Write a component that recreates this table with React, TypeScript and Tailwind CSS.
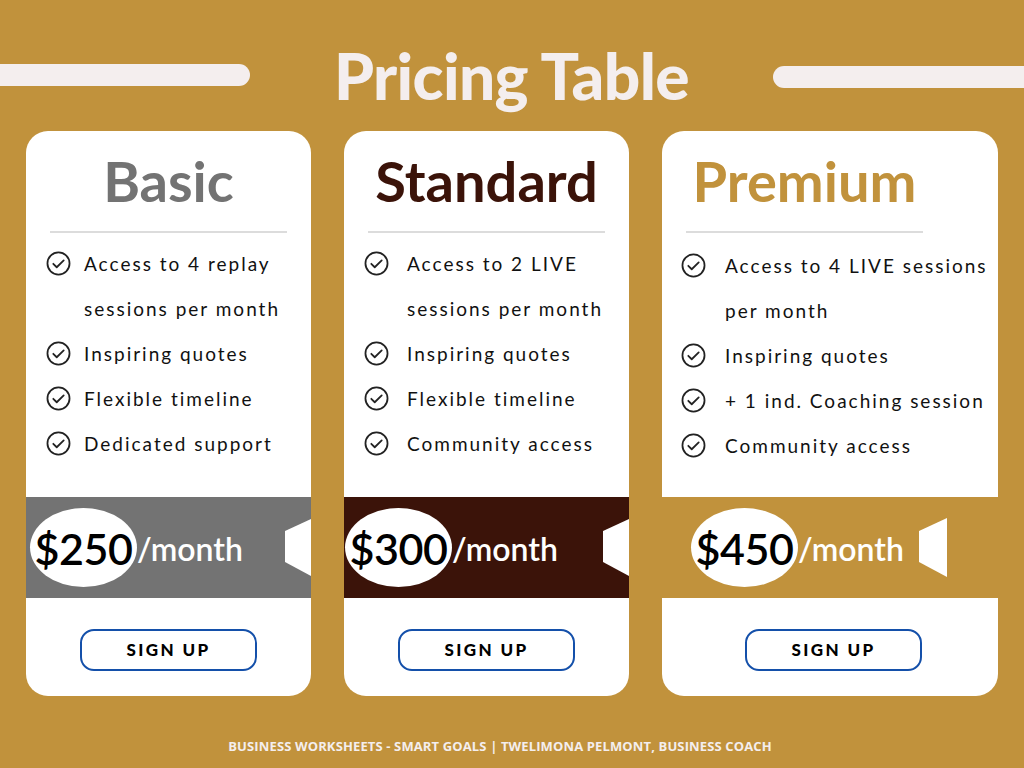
import React from "react";

type Plan = {
  name: string;
  nameColor: string;
  band: string;
  price: string;
  features: string[];
  wide?: boolean;
};

const PLANS: Plan[] = [
  {
    name: "Basic",
    nameColor: "text-[#737373]",
    band: "bg-[#737373]",
    price: "$250",
    features: ["Access to 4 replay sessions per month", "Inspiring quotes", "Flexible timeline", "Dedicated support"],
  },
  {
    name: "Standard",
    nameColor: "text-[#3b1309]",
    band: "bg-[#3b1309]",
    price: "$300",
    features: ["Access to 2 LIVE sessions per month", "Inspiring quotes", "Flexible timeline", "Community access"],
  },
  {
    name: "Premium",
    nameColor: "text-[#c1923c]",
    band: "bg-[#c1923c]",
    price: "$450",
    features: ["Access to 4 LIVE sessions per month", "Inspiring quotes", "+ 1 ind. Coaching session", "Community access"],
    wide: true,
  },
];

function CheckIcon() {
  return (
    <svg width="25" height="25" viewBox="0 0 24 24" fill="none" stroke="#222" strokeWidth="1.7" strokeLinecap="round" strokeLinejoin="round">
      <circle cx="12" cy="12" r="10.6" />
      <path d="M7 12.3l3.3 3.3L17 9" />
    </svg>
  );
}

function Speaker() {
  // white wedge at the right of the price band
  return (
    <svg width="28" height="59" viewBox="0 0 28 59" className="shrink-0">
      <polygon points="0,13 28,0 28,59 0,44" fill="#fff" />
    </svg>
  );
}

function Card({ plan, index }: { plan: Plan; index: number }) {
  const textPad = index === 0 ? "gap-[13px]" : index === 1 ? "gap-[18px]" : "gap-[19px]";
  return (
    <div className={`${plan.wide ? "w-[336px]" : "w-[285px]"} h-[565px] shrink-0 bg-white rounded-[22px] overflow-hidden flex flex-col`}>
      {/* header */}
      <div className="w-[285px] h-[100px] flex items-center justify-center">
        <h2 className={`font-['Lato'] font-bold text-[56px] leading-none ${plan.nameColor}`}>{plan.name}</h2>
      </div>
      <div className="ml-[24px] w-[237px] h-[2px] bg-[#dcdcdc]" />

      {/* features */}
      <ul className={`${index === 2 ? "mt-[10px] h-[254px] pl-[19px] pr-[4px]" : "mt-[8px] h-[256px] pl-[20px] pr-[10px]"}`}>
        {plan.features.map((f) => (
          <li key={f} className={`flex items-start ${textPad}`}>
            <span className="h-[45px] flex items-center shrink-0">
              <CheckIcon />
            </span>
            <span className="font-['Lato'] text-[19px] leading-[45px] tracking-[0.105em] text-[#111]">{f}</span>
          </li>
        ))}
      </ul>

      {/* price band */}
      <div className={`${plan.band} h-[101px] flex items-center ${index === 0 ? "pl-[4px]" : index === 1 ? "pl-[1px]" : "pl-[29px] pr-[51px]"}`}>
        <div className="w-[107px] h-[79px] rounded-[50%] bg-white flex items-center justify-center shrink-0">
          <span className="font-['Lato'] font-semibold text-[43px] leading-none text-black tracking-[-0.01em] pt-[2px]">{plan.price}</span>
        </div>
        <span className="font-['Lato'] font-semibold text-[32px] leading-none text-white mt-[2px]">/month</span>
        <div className={`ml-auto ${index === 2 ? "" : "mr-[-2px]"} flex items-center`}>
          <Speaker />
        </div>
      </div>

      {/* button */}
      <div className={`${plan.wide ? "pl-[83px]" : "justify-center"} flex pt-[31px]`}>
        <button className="w-[177px] h-[42px] rounded-[14px] border-2 border-[#1450aa] bg-white font-['Lato'] font-black text-[17px] leading-none tracking-[0.14em] text-black pb-[2px]">
          SIGN UP
        </button>
      </div>
    </div>
  );
}

export default function App() {
  return (
    <div className="w-[1024px] h-[768px] bg-[#c1923c] overflow-hidden flex flex-col">
      {/* title row */}
      <div className="h-[131px] flex items-start pt-[34px]">
        <div className="w-[250px] h-[22px] mt-[30px] bg-[#f4eeee] rounded-r-full" />
        <h1 className="flex-1 text-center font-['Lato'] font-black text-[64px] leading-[84px] text-[#f4eeee] tracking-[-0.01em]">
          Pricing Table
        </h1>
        <div className="w-[251px] h-[22px] mt-[32px] bg-[#f4eeee] rounded-l-full" />
      </div>

      {/* cards */}
      <div className="flex pl-[26px] gap-[33px]">
        {PLANS.map((p, i) => (
          <Card key={p.name} plan={p} index={i} />
        ))}
      </div>

      {/* footer */}
      <div className="flex justify-center pt-[44px] pr-[24px]">
        <p className="font-['Open_Sans'] font-bold text-[13px] leading-none text-[#f4eeee] tracking-[0.01em]">
          BUSINESS WORKSHEETS - SMART GOALS | TWELIMONA PELMONT, BUSINESS COACH
        </p>
      </div>
    </div>
  );
}
